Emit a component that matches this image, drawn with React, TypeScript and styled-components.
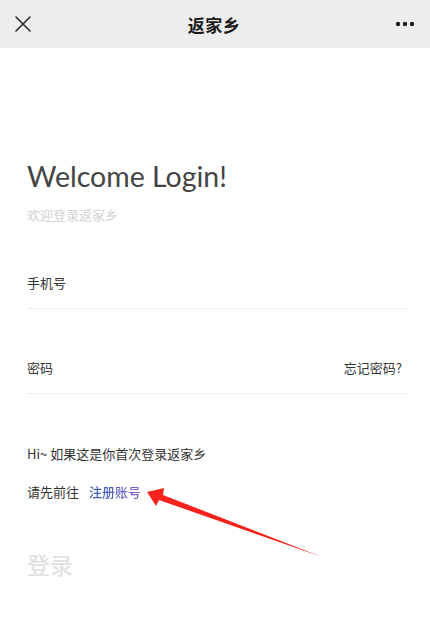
import React from "react";
import styled, { createGlobalStyle } from "styled-components";

const Global = createGlobalStyle`
  html, body { margin: 0; padding: 0; background: #ffffff; }
  body { font-family: "Noto Sans CJK SC", "Noto Sans", sans-serif; }
  * { box-sizing: border-box; }
`;

const Page = styled.div`
  position: relative;
  width: 430px;
  height: 622px;
  overflow: hidden;
  background: #fff;
  display: flex;
  flex-direction: column;
`;

const NavBar = styled.header`
  height: 48px;
  background: #ededed;
  display: flex;
  align-items: center;
  justify-content: space-between;
  padding: 0 14px 0 12px;
  flex-shrink: 0;
`;

const NavTitle = styled.div`
  font-size: 17px;
  font-weight: 700;
  color: #1b1b1b;
  letter-spacing: 0.5px;
`;

const IconBox = styled.div`
  width: 22px;
  height: 22px;
  display: flex;
  align-items: center;
  justify-content: center;
`;

const Body = styled.main`
  display: flex;
  flex-direction: column;
  padding: 110px 22px 0 27px;
`;

const Heading = styled.h1`
  margin: 0;
  font-family: "Lato", "Noto Sans", sans-serif;
  font-weight: 400;
  font-size: 28.5px;
  line-height: 36px;
  color: #454545;
`;

const SubHeading = styled.div`
  margin-top: 12px;
  font-size: 13px;
  line-height: 18px;
  color: #d2d2d2;
`;

const Field = styled.div`
  margin-top: 50px;
  height: 35px;
  display: flex;
  align-items: flex-start;
  justify-content: space-between;
  border-bottom: 1px solid #eeeeee;
  font-size: 13px;
  line-height: 18px;
  color: #333;
  padding-right: 6px;
`;

const Forgot = styled.span`
  color: #333;
`;

const Note = styled.div<{ $top: number }>`
  margin-top: ${(p) => p.$top}px;
  font-size: 13px;
  line-height: 18px;
  color: #333;
  display: flex;
  gap: 10px;
`;

const RegisterLink = styled.span`
  background: linear-gradient(90deg, #3460b0 0%, #5a62c4 50%, #9160d4 100%);
  -webkit-background-clip: text;
  background-clip: text;
  color: transparent;
  font-weight: 500;
`;

const LoginButton = styled.div`
  margin-top: 48px;
  font-size: 23px;
  line-height: 30px;
  font-weight: 500;
  color: #e2e2e2;
`;

const Arrow = styled.svg`
  position: absolute;
  left: 0;
  top: 0;
  pointer-events: none;
`;

export default function App() {
  return (
    <Page>
      <Global />
      <NavBar>
        <IconBox>
          <svg width="18" height="18" viewBox="0 0 18 18">
            <path d="M2 2 L16 16 M16 2 L2 16" stroke="#2a2a2a" strokeWidth="1.6" strokeLinecap="round" />
          </svg>
        </IconBox>
        <NavTitle>返家乡</NavTitle>
        <IconBox>
          <svg width="20" height="6" viewBox="0 0 20 6">
            <circle cx="3" cy="3" r="2.2" fill="#1f1f1f" />
            <circle cx="10" cy="3" r="2.2" fill="#1f1f1f" />
            <circle cx="17" cy="3" r="2.2" fill="#1f1f1f" />
          </svg>
        </IconBox>
      </NavBar>
      <Body>
        <Heading>Welcome Login!</Heading>
        <SubHeading>欢迎登录返家乡</SubHeading>
        <Field>
          <span>手机号</span>
        </Field>
        <Field>
          <span>密码</span>
          <Forgot>忘记密码?</Forgot>
        </Field>
        <Note $top={51}>Hi~ 如果这是你首次登录返家乡</Note>
        <Note $top={20}>
          <span>请先前往</span>
          <RegisterLink>注册账号</RegisterLink>
        </Note>
        <LoginButton>登录</LoginButton>
      </Body>
      <Arrow width="430" height="622" viewBox="0 0 430 622">
        <polygon
          points="147,492 164,488 163,495 322,557 159,500 156,506"
          fill="#f5231c"
        />
      </Arrow>
    </Page>
  );
}
